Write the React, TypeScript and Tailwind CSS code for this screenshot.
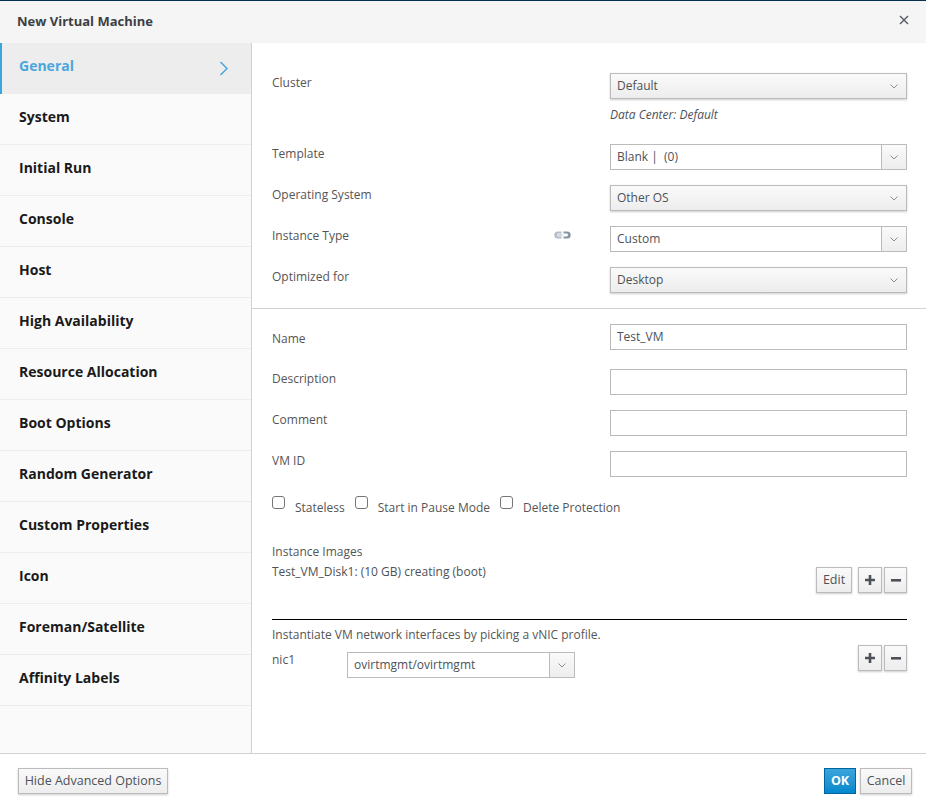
import type { ReactNode } from 'react'

const tabs = [
  'General',
  'System',
  'Initial Run',
  'Console',
  'Host',
  'High Availability',
  'Resource Allocation',
  'Boot Options',
  'Random Generator',
  'Custom Properties',
  'Icon',
  'Foreman/Satellite',
  'Affinity Labels',
]

const btn =
  'flex h-[26px] items-center border border-[#bbbbbb] bg-gradient-to-b from-[#fafafa] to-[#ededed] shadow-[0_1px_2px_rgba(0,0,0,0.2)]'

const Caret = () => (
  <svg width="8" height="5" viewBox="0 0 8 5" fill="none" stroke="#8b8d8f" strokeWidth="1">
    <path d="M0.5 0.5 L4 4 L7.5 0.5" />
  </svg>
)

const Select = ({ value }: { value: string }) => (
  <div className={`${btn} w-full justify-between pr-[8px] pl-[6px] text-[#4d5258]`}>
    <span>{value}</span>
    <Caret />
  </div>
)

const Combo = ({ value, className = 'w-full' }: { value: string; className?: string }) => (
  <div className={`flex h-[26px] border border-[#bbbbbb] bg-white text-[#4d5258] ${className}`}>
    <span className="flex-1 pl-[6px] leading-[24px] whitespace-pre">{value}</span>
    <span className="flex w-[25px] items-center justify-center border-l border-[#bbbbbb] bg-gradient-to-b from-[#fafafa] to-[#ededed]">
      <Caret />
    </span>
  </div>
)

const TextInput = ({ value = '' }: { value?: string }) => (
  <div className="h-[26px] w-full border border-[#bbbbbb] bg-white pl-[6px] leading-[24px] text-[#4d5258]">
    {value}
  </div>
)

const Row = ({
  label,
  children,
  className = '',
  labelClass = 'pt-px',
  icon,
}: {
  label: string
  children: ReactNode
  className?: string
  labelClass?: string
  icon?: ReactNode
}) => (
  <div className={`flex items-start ${className}`}>
    <div className={`flex w-[338px] justify-between pr-[39px] leading-[18px] ${labelClass}`}>
      <span>{label}</span>
      {icon}
    </div>
    <div className="w-[297px]">{children}</div>
  </div>
)

const LinkIcon = () => (
  <svg width="17" height="8" viewBox="0 0 17 8" className="mt-[4px]">
    <path d="M7.5 0.5 H3.8 a3.5 3.5 0 0 0 0 7 H7.5 V5.4 H4.4 a1.4 1.4 0 0 1 0 -2.8 H7.5 Z" fill="#b4bec8" />
    <path d="M9.5 0.5 H13.2 a3.5 3.5 0 0 1 0 7 H9.5 V5.4 H12.6 a1.4 1.4 0 0 0 0 -2.8 H9.5 Z" fill="#8796a6" />
    <rect x="3.5" y="2.6" width="5" height="2.8" fill="#d3d9df" />
  </svg>
)

const Check = ({ label, className = '' }: { label: string; className?: string }) => (
  <div className={`flex ${className}`}>
    <span className="h-[13px] w-[13px] rounded-[3px] border border-[#767676] bg-white" />
    <span className="mt-[3px] ml-[10px] leading-[18px]">{label}</span>
  </div>
)

const PlusMinus = () => (
  <div className="flex gap-[2px]">
    <div className={`${btn} w-[24px] justify-center`}>
      <svg width="10" height="10" viewBox="0 0 10 10" fill="#4d5258">
        <path d="M3.7 0 H6.3 V3.7 H10 V6.3 H6.3 V10 H3.7 V6.3 H0 V3.7 H3.7 Z" />
      </svg>
    </div>
    <div className={`${btn} w-[23px] justify-center`}>
      <svg width="10" height="3" viewBox="0 0 10 3" fill="#4d5258">
        <rect width="10" height="2.6" />
      </svg>
    </div>
  </div>
)

const App = () => {
  return (
    <div className="flex h-[810px] w-[926px] flex-col overflow-hidden border-t border-[#03314f] bg-white font-['Open_Sans',sans-serif] text-[12px] text-[#555555]">
      {/* Header */}
      <header className="flex h-[42px] items-center justify-between bg-[#f5f5f5] pr-[17px] pl-[17px]">
        <h1 className="text-[13px] font-bold text-[#3c3f44]">New Virtual Machine</h1>
        <svg width="10" height="10" viewBox="0 0 10 10" stroke="#5c6066" strokeWidth="1.5" className="-mt-[5px]">
          <path d="M1 1 L9 9 M9 1 L1 9" />
        </svg>
      </header>

      <div className="flex h-[710px]">
        {/* Side tabs */}
        <nav className="w-[252px] shrink-0 border-r border-[#d1d1d1] bg-[#fafafa]">
          {tabs.map((tab, i) =>
            i === 0 ? (
              <div
                key={tab}
                className="flex h-[51px] items-center justify-between border-l-2 border-[#39a5dc] bg-[#ededed] pr-[22px] pl-[17px] text-[14px] font-bold text-[#4ba6dd]"
              >
                <span className="-mt-[7px]">{tab}</span>
                <svg width="10" height="15" viewBox="0 0 10 15" fill="none" stroke="#4ba6dd" strokeWidth="1.5">
                  <path d="M1.5 1 L8 7.5 L1.5 14" />
                </svg>
              </div>
            ) : (
              <div
                key={tab}
                className="flex h-[51px] items-center border-b border-[#ededed] pl-[19px] text-[14px] font-bold text-[#1a1a1a]"
              >
                <span className="-mt-[5px]">{tab}</span>
              </div>
            ),
          )}
        </nav>

        {/* Form */}
        <main className="flex-1">
          <div className="px-[20px] pt-[30px] pb-[15px]">
            <Row label="Cluster" className="h-[26px]">
              <Select value="Default" />
            </Row>
            <p className="mt-[7px] ml-[338px] leading-[18px] text-[#4d5258] italic">Data Center: Default</p>
            <Row label="Template" className="mt-[20px]">
              <Combo value="Blank |  (0)" />
            </Row>
            <Row label="Operating System" className="mt-[15px]">
              <Select value="Other OS" />
            </Row>
            <Row label="Instance Type" className="mt-[15px]" icon={<LinkIcon />}>
              <Combo value="Custom" />
            </Row>
            <Row label="Optimized for" className="mt-[15px]">
              <Select value="Desktop" />
            </Row>
          </div>

          <div className="border-t border-[#d1d1d1] px-[20px] pt-[15px]">
            <Row label="Name" labelClass="pt-[6px]">
              <TextInput value="Test_VM" />
            </Row>
            <Row label="Description" className="mt-[19px]">
              <TextInput />
            </Row>
            <Row label="Comment" className="mt-[15px]">
              <TextInput />
            </Row>
            <Row label="VM ID" className="mt-[15px]">
              <TextInput />
            </Row>

            <div className="mt-[19px] flex">
              <Check label="Stateless" />
              <Check label="Start in Pause Mode" className="ml-[10px]" />
              <Check label="Delete Protection" className="ml-[10px]" />
            </div>

            <div className="mt-[25px] flex h-[73px] justify-between">
              <div className="leading-[20px]">
                <p>Instance Images</p>
                <p className="text-[#4d5258]">Test_VM_Disk1: (10 GB) creating (boot)</p>
              </div>
              <div className="mt-[25px] flex gap-[6px]">
                <div className={`${btn} w-[36px] justify-center text-[12.5px] text-[#4d5258]`}>Edit</div>
                <PlusMinus />
              </div>
            </div>

            <div className="mt-[4px] w-[635px] border-t border-black pt-[6px]">
              <p className="leading-[18px]">Instantiate VM network interfaces by picking a vNIC profile.</p>
              <div className="flex items-start justify-between">
                <div className="mt-[8px] flex">
                  <span className="-mt-px w-[75px] leading-[18px]">nic1</span>
                  <Combo value="ovirtmgmt/ovirtmgmt" className="w-[228px]" />
                </div>
                <div className="mt-px">
                  <PlusMinus />
                </div>
              </div>
            </div>
          </div>
        </main>
      </div>

      {/* Footer */}
      <footer className="flex flex-1 items-start justify-between border-t border-[#d1d1d1] pt-[14px] pr-[14px] pl-[18px] text-[12.5px] text-[#4d5258]">
        <div className={`${btn} w-[150px] justify-center`}>Hide Advanced Options</div>
        <div className="flex gap-[4px]">
          <div className="flex h-[26px] w-[32px] items-center justify-center border border-[#00659c] bg-gradient-to-b from-[#39a5dc] to-[#0088ce] font-bold text-white">
            OK
          </div>
          <div className={`${btn} w-[52px] justify-center`}>Cancel</div>
        </div>
      </footer>
    </div>
  )
}

export default App
